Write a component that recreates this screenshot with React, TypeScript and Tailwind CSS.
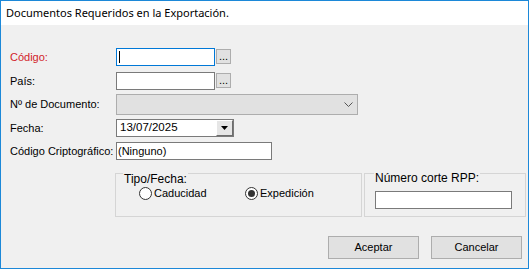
import React from "react";

const font = { fontFamily: '"Liberation Sans", Arial, sans-serif' };

const Label = ({ text, red }: { text: string; red?: boolean }) => (
  <div className={`w-[106px] text-[11px] leading-none ${red ? "text-[#d2232a]" : "text-black"}`}>{text}</div>
);

const DotsButton = () => (
  <div className="self-start mt-[1px] ml-[1px] w-[15px] h-[15px] border border-[#adadad] bg-[#e1e1e1] flex items-end justify-center text-[11px] leading-[11px] pb-[1px] text-black">
    ...
  </div>
);

const Radio = ({ label, checked }: { label: string; checked?: boolean }) => (
  <div className="flex items-center">
    <div className="w-[13px] h-[13px] rounded-full border border-[#333333] bg-white flex items-center justify-center">
      {checked && <div className="w-[7px] h-[7px] rounded-full bg-[#333333]" />}
    </div>
    <span className="ml-[2px] text-[11px] leading-none text-black">{label}</span>
  </div>
);

export default function App() {
  return (
    <div className="w-[529px] h-[269px] border border-[#1c88d8] flex flex-col bg-[#f0f0f0]" style={font}>
      <div className="h-[24px] bg-white flex items-center pl-[5px]">
        <span className="text-[11px] text-black" style={{ fontFamily: '"Noto Sans", "Open Sans", sans-serif' }}>
          Documentos Requeridos en la Exportación.
        </span>
      </div>

      <div className="flex flex-col pt-[23px] pl-[9px]">
        {/* Código */}
        <div className="flex items-center h-[18px]">
          <Label text="Código:" red />
          <div className="w-[99px] h-[18px] border border-[#0078d7] bg-white flex items-center pl-[2px]">
            <div className="w-[1px] h-[12px] bg-black" />
          </div>
          <DotsButton />
        </div>

        {/* País */}
        <div className="flex items-center h-[18px] mt-[6px]">
          <Label text="País:" />
          <div className="w-[99px] h-[18px] border border-[#7a7a7a] bg-white" />
          <DotsButton />
        </div>

        {/* Nº de Documento */}
        <div className="flex items-center h-[21px] mt-[4px]">
          <Label text="Nº de Documento:" />
          <div className="w-[242px] h-[21px] border border-[#adadad] bg-[#e1e1e1] flex items-center justify-end pr-[4px]">
            <svg width="9" height="5" viewBox="0 0 9 5">
              <path d="M0.5 0.5 L4.5 4.5 L8.5 0.5" fill="none" stroke="#555555" strokeWidth="1" />
            </svg>
          </div>
        </div>

        {/* Fecha */}
        <div className="flex items-center h-[18px] mt-[4px]">
          <Label text="Fecha:" />
          <div className="w-[118px] h-[18px] border border-[#7a7a7a] bg-white flex items-center">
            <span className="flex-1 pl-[3px] text-[11.5px] leading-none text-black">13/07/2025</span>
            <div className="w-[17px] h-[16px] bg-[#e6e6e6] border-t border-l border-white border-r border-b border-r-[#6d6d6d] border-b-[#6d6d6d] flex items-center justify-center">
              <svg width="7" height="4" viewBox="0 0 7 4">
                <path d="M0 0 L7 0 L3.5 4 Z" fill="#000000" />
              </svg>
            </div>
          </div>
        </div>

        {/* Código Criptográfico */}
        <div className="flex items-center h-[18px] mt-[5px]">
          <Label text="Código Criptográfico:" />
          <div className="w-[156px] h-[18px] border border-[#7a7a7a] bg-white flex items-center pl-[1px]">
            <span className="text-[11px] leading-none text-black">(Ninguno)</span>
          </div>
        </div>

        {/* Groups */}
        <div className="flex mt-[13px] ml-[105px]">
          <div className="relative w-[247px] h-[44px] border border-[#d5d5d5]">
            <span className="absolute left-[7px] top-[-1px] px-[1px] bg-[#f0f0f0] text-[12px] leading-none text-black">
              Tipo/Fecha:
            </span>
            <div className="flex items-center mt-[13px] ml-[23px]">
              <div className="w-[106px]">
                <Radio label="Caducidad" />
              </div>
              <Radio label="Expedición" checked />
            </div>
          </div>
          <div className="relative w-[162px] h-[44px] border border-[#d5d5d5] ml-[2px]">
            <span className="absolute left-[9px] top-[-2px] px-[1px] bg-[#f0f0f0] text-[12px] leading-none text-black">
              Número corte RPP:
            </span>
            <div className="mt-[17px] ml-[10px] w-[137px] h-[18px] border border-[#7a7a7a] bg-white" />
          </div>
        </div>

        {/* Buttons */}
        <div className="flex justify-end gap-[12px] mt-[19px] pr-[6px]">
          <div className="w-[91px] h-[23px] border border-[#adadad] bg-[#e1e1e1] flex items-center justify-center text-[11px] text-black">
            Aceptar
          </div>
          <div className="w-[91px] h-[23px] border border-[#adadad] bg-[#e1e1e1] flex items-center justify-center text-[11px] text-black">
            Cancelar
          </div>
        </div>
      </div>
    </div>
  );
}
